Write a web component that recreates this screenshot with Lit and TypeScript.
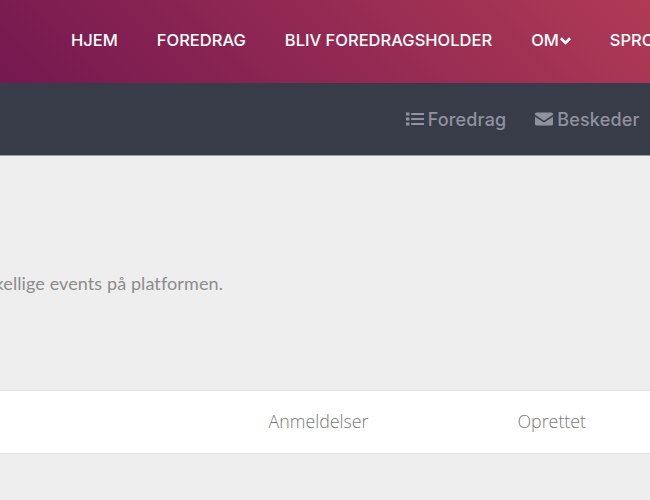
import { LitElement, html, css } from "lit";
import { customElement } from "lit/decorators.js";

@customElement("app-root")
export class AppRoot extends LitElement {
  static styles = css`
    :host { display: block; width: 650px; height: 500px; overflow: hidden; background: #eeeeee; }
    .nav {
      height: 83px; display: flex; align-items: center; gap: 39px; padding: 0 0 3px 71px; box-sizing: border-box;
      background: linear-gradient(45deg, #741850 0%, #b03a55 100%);
      color: #fff; font: 500 16.5px "Inter", "Liberation Sans", sans-serif; white-space: nowrap; overflow: hidden;
    }
    .om { display: inline-flex; align-items: center; gap: 1px; }
    .om svg { width: 11px; height: 9px; fill: #fff; }
    .sub {
      height: 72px; background: #383c49; display: flex; justify-content: flex-end; align-items: center;
      gap: 29px; padding-right: 10.500px; color: #8f929f; font: 500 18px "Inter", "Liberation Sans", sans-serif;
      letter-spacing: 0.15px; box-shadow: 0 1px 0 #9a9ca3;
    }
    .link { display: inline-flex; align-items: center; gap: 4px; }
    .link svg { width: 18px; height: 16px; fill: #8f929f; }
    .intro {
      display: flex; justify-content: flex-end; padding: 116px 427px 0 0; white-space: nowrap;
      font: 400 18px/24px "Lato", "Liberation Sans", sans-serif; color: #8c8c8c; letter-spacing: 0.1px;
    }
    .table {
      margin-top: 95px; height: 64px; box-sizing: border-box; background: #fff;
      border-top: 1px solid #e2e2e2; border-bottom: 1px solid #e2e2e2;
      display: flex; align-items: center; justify-content: flex-end; gap: 149px; padding: 0 64px 2px 0;
      font: 300 17.8px "Open Sans", "Liberation Sans", sans-serif; color: #777;
    }
  `;
  render() {
    return html`
      <div class="nav">
        <span>HJEM</span><span>FOREDRAG</span><span>BLIV FOREDRAGSHOLDER</span>
        <span class="om">OM<svg viewBox="0 0 12 9"><path d="M6 9 0 3l2-2 4 4 4-4 2 2z"/></svg></span>
        <span>SPROG</span>
      </div>
      <div class="sub">
        <span class="link"><svg viewBox="0 0 18 16"><path d="M0 1.500h3.400v3H0zM5.200 1.900H18v2.200H5.200zM0 6.500h3.400v3H0zM5.200 6.900H18v2.200H5.200zM0 11.500h3.400v3H0zM5.200 11.900H18v2.200H5.200z"/></svg>Foredrag</span>
        <span class="link"><svg viewBox="0 0 18 16"><path d="M1.500 1.500h15A1.500 1.500 0 0 1 18 3v.8L9 9.800 0 3.800V3a1.500 1.500 0 0 1 1.500-1.500zM0 5.800l9 5.800 9-5.800V13a1.500 1.500 0 0 1-1.500 1.500h-15A1.500 1.500 0 0 1 0 13z"/></svg>Beskeder</span>
      </div>
      <div class="intro"><span>Her kan du se dine forskellige events på platformen.</span></div>
      <div class="table"><span>Anmeldelser</span><span>Oprettet</span></div>
    `;
  }
}
